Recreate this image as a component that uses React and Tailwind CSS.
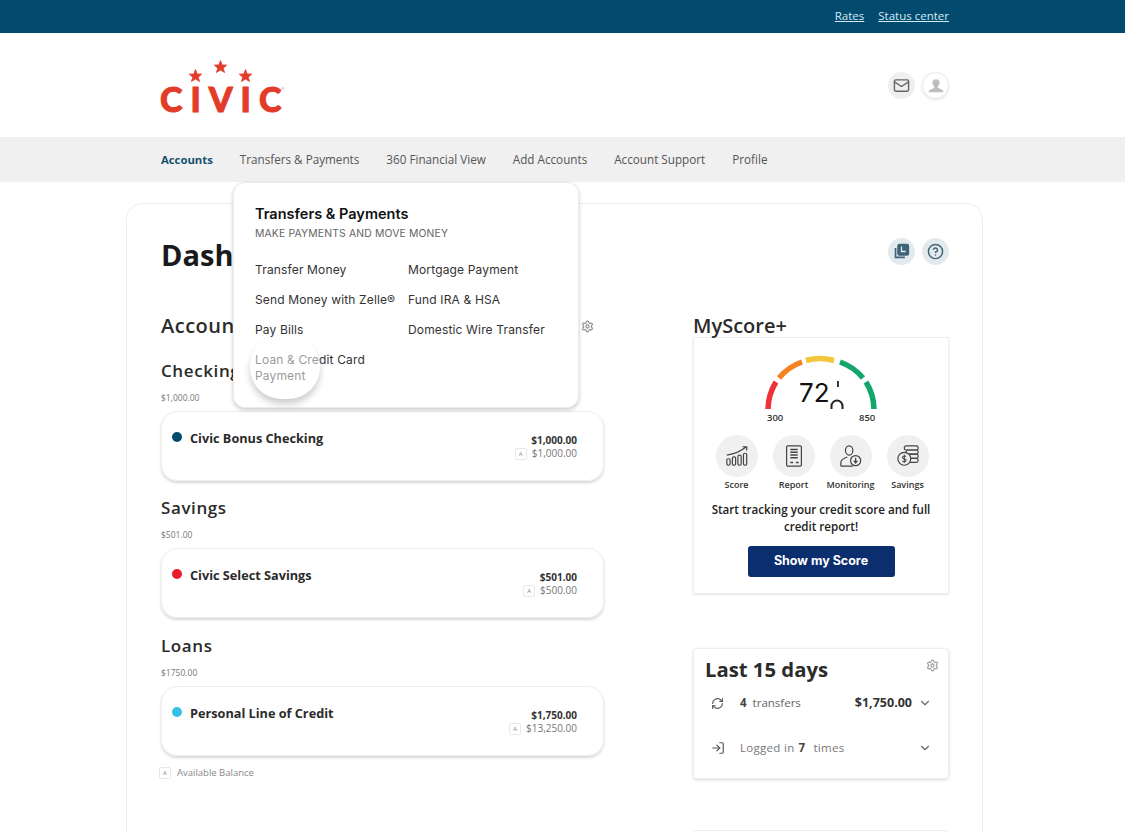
import React from "react";
import { ChevronDown, CircleHelp, LogIn, Mail, RefreshCw, Settings } from "lucide-react";

const open = "font-['Open_Sans',sans-serif]";
const inter = "font-['Inter',sans-serif]";

const Star = ({ className }) => (
  <svg viewBox="0 0 24 24" className={className}>
    <polygon fill="#e33b2a" stroke="#e33b2a" strokeWidth="1.500" strokeLinejoin="round" points="12,1 15,9 23.500,9.500 17,15 19.500,23 12,18.500 4.500,23 7,15 0.500,9.500 9,9" />
  </svg>
);

const Logo = () => (
  <div className="flex flex-col w-[126px]">
    <div className="flex justify-center items-start gap-[12px] h-[25px] -ml-[6px]">
      <Star className="w-[13px] h-[13px] mt-[9px]" />
      <Star className="w-[13px] h-[13px]" />
      <Star className="w-[13px] h-[13px] mt-[9px]" />
    </div>
    <div className="flex items-start h-[30px] -mt-[1px]">
      <span className="font-['Lato',sans-serif] font-black text-[#e33b2a] text-[34px] leading-[30px] tracking-[8px] [-webkit-text-stroke:1px_#e33b2a]">
        CIVI<span className="tracking-normal">C</span>
      </span>
      <span className="text-[4px] text-gray-400 mt-[2px]">®</span>
    </div>
  </div>
);

const NavItem = ({ children, active }) => (
  <span className={`${open} ${active ? "text-[11.300px] font-bold text-[#14506f]" : "text-[11.700px] text-[#555]"}`}>{children}</span>
);

const RoundIcon = ({ children, className }) => (
  <div className={`w-[27px] h-[27px] rounded-full flex items-center justify-center ${className}`}>{children}</div>
);

const ABadge = () => (
  <span className="w-[12px] h-[12px] border border-[#e8e8e8] rounded-[2px] text-[6px] leading-[10px] text-center text-[#888]">A</span>
);

const Section = ({ title, total, dot, name, amount, available, className }) => (
  <div className={className}>
    <h3 className={`${open} font-semibold text-[17px] leading-[24px] tracking-[0.600px] text-[#2b2b2b]`}>{title}</h3>
    <p className={`${open} text-[8.500px] leading-[12px] mt-[9px] text-[#777]`}>{total}</p>
    <div className="mt-[7px] h-[70px] rounded-[16px] border border-[#eeeeee] shadow-[0_2px_3px_rgba(0,0,0,0.16)] flex justify-between pl-[10px] pr-[26px] pt-[17px]">
      <div className="flex items-start gap-[8px]">
        <span className={`w-[10px] h-[10px] rounded-full mt-[3px] ${dot}`} />
        <span className={`${open} font-bold text-[12.700px] leading-[18px] text-[#2b2b2b]`}>{name}</span>
      </div>
      <div className={`${open} flex flex-col items-end text-[10px] leading-[13px] pt-[5px]`}>
        <span className="font-bold text-[#333]">{amount}</span>
        <span className="flex items-center gap-[5px] text-[#777]">
          <ABadge />
          {available}
        </span>
      </div>
    </div>
  </div>
);

const Gauge = () => (
  <svg viewBox="0 0 120 62" className="w-[120px] h-[62px]" fill="none" strokeWidth="5.500">
    <path d="M7 55 A52 52 0 0 1 15 28" stroke="#ee3338" />
    <path d="M18 24 A52 52 0 0 1 41 8" stroke="#f58220" />
    <path d="M45 6.500 A52 52 0 0 1 73 6.500" stroke="#f4c63d" />
    <path d="M79 8 A52 52 0 0 1 102 24" stroke="#12a66c" />
    <path d="M105 28 A52 52 0 0 1 113 55" stroke="#12a66c" />
    <path d="M77 27 L77 33" stroke="#222" strokeWidth="1.800" />
    <path d="M70.500 55 V52 A5.500 5.500 0 0 1 81.500 52 V55" stroke="#222" strokeWidth="2" />
  </svg>
);

const ScoreIcon = () => (
  <svg viewBox="0 0 26 26" className="w-[24px] h-[24px]" fill="none" stroke="#444" strokeWidth="1.300">
    <rect x="2" y="16" width="3.500" height="7" rx="1.500" />
    <rect x="8" y="14" width="3.500" height="9" rx="1.500" />
    <rect x="14" y="12" width="3.500" height="11" rx="1.500" />
    <rect x="20" y="10" width="3.500" height="13" rx="1.500" />
    <path d="M2 12 C9 11 16 9 23 3 M19 3 H23.500 V7" />
  </svg>
);

const ReportIcon = () => (
  <svg viewBox="0 0 26 26" className="w-[24px] h-[24px]" fill="none" stroke="#444" strokeWidth="1.300">
    <rect x="5" y="2" width="16" height="22" rx="1.500" />
    <path d="M9 6 H17 M9 9 H17 M9 12 H17 M9 15 H17 M9 20 H12 M15 20 H18" strokeWidth="1.600" />
  </svg>
);

const MonitorIcon = () => (
  <svg viewBox="0 0 26 26" className="w-[24px] h-[24px]" fill="none" stroke="#444" strokeWidth="1.300">
    <ellipse cx="11" cy="7" rx="4" ry="5" />
    <path d="M2 24 V20 C2 16 7 15 9 14 M2 24 H15" />
    <circle cx="18" cy="18" r="5.500" />
    <path d="M18 15 V20 M16 18 L18 20.500 L20 18" />
  </svg>
);

const SavingsIcon = () => (
  <svg viewBox="0 0 26 26" className="w-[24px] h-[24px]" fill="none" stroke="#444" strokeWidth="1.300">
    <rect x="9" y="2" width="15" height="4.500" rx="2" />
    <rect x="11" y="6.500" width="13" height="4.500" rx="2" />
    <rect x="13" y="11" width="11" height="4.500" rx="2" />
    <rect x="13" y="15.500" width="11" height="4.500" rx="2" />
    <circle cx="9" cy="16" r="7" fill="#f0f0f0" />
    <path d="M11 13.500 C10 12.500 7 12.800 7 14.500 C7 16.500 11 15.500 11 17.500 C11 19.200 8 19.500 7 18.500 M9 11.500 V20.500" strokeWidth="1.100" />
  </svg>
);

const Feature = ({ label, children }) => (
  <div className="flex flex-col items-center w-[57px]">
    <div className="w-[42px] h-[42px] rounded-full bg-[#f0f0f0] flex items-center justify-center">{children}</div>
    <span className={`${open} font-semibold text-[9px] leading-[12px] mt-[2px] text-[#333] whitespace-nowrap`}>{label}</span>
  </div>
);

const DropLink = ({ children, className }) => (
  <span className={`${inter} text-[12px] leading-[16px] tracking-[0.150px] text-[#333] ${className}`}>{children}</span>
);

const NavDropdown = () => (
  <div className="absolute left-[233px] top-[182px] w-[346px] h-[226px] bg-white rounded-[12px] border border-[#ececec] shadow-[0_2px_4px_rgba(0,0,0,0.2)] pl-[21px] pt-[23px] z-10">
    <p className={`${inter} font-semibold text-[14.500px] leading-[16px] text-[#111]`}>Transfers &amp; Payments</p>
    <p className={`${inter} text-[10.400px] leading-[12px] mt-[6px] text-[#666] tracking-[0.150px]`}>MAKE PAYMENTS AND MOVE MONEY</p>
    <div className="grid grid-cols-[153px_150px] gap-y-[14px] mt-[22px]">
      <DropLink>Transfer Money</DropLink>
      <DropLink>Mortgage Payment</DropLink>
      <DropLink>Send Money with Zelle®</DropLink>
      <DropLink>Fund IRA &amp; HSA</DropLink>
      <DropLink>Pay Bills</DropLink>
      <DropLink>Domestic Wire Transfer</DropLink>
      <DropLink className="w-[125px]">Loan &amp; Credit Card Payment</DropLink>
    </div>
    {/* click highlight */}
    <div className="absolute left-[16px] top-[152px] w-[70px] h-[64px] rounded-full bg-white/50 shadow-[0_5px_7px_rgba(0,0,0,0.2)]" />
  </div>
);

const App = () => {
  return (
    <div className="relative w-[1125px] h-[833px] overflow-hidden bg-white">
      {/* Top bar */}
      <div className="h-[33px] bg-[#024b6e] flex justify-end items-center gap-[14px] pr-[176px] pb-[2px]">
        <a className={`${open} text-[11.500px] underline text-[#d4eaf5]`}>Rates</a>
        <a className={`${open} text-[11.500px] underline text-[#d4eaf5]`}>Status center</a>
      </div>

      {/* Logo row */}
      <div className="h-[104px] flex justify-between items-start pl-[160px] pr-[176px]">
        <div className="pt-[27px]">
          <Logo />
        </div>
        <div className="flex gap-[7px] pt-[39px]">
          <RoundIcon className="bg-[#efefef]">
            <Mail size={17} strokeWidth={2} color="#666" />
          </RoundIcon>
          <RoundIcon className="border border-[#e8e8e8] shadow-sm">
            <svg viewBox="0 0 20 20" className="w-[18px] h-[18px]" fill="#bdbdbd">
              <circle cx="10" cy="6.500" r="4" />
              <path d="M8 10 H12 V12 L18 15 V17 H2 V15 L8 12 Z" />
            </svg>
          </RoundIcon>
        </div>
      </div>

      {/* Nav */}
      <div className="h-[45px] bg-[#f0f0f0] flex items-center gap-[27px] pl-[161px] pt-[1px]">
        <NavItem active>Accounts</NavItem>
        <NavItem>Transfers &amp; Payments</NavItem>
        <NavItem>360 Financial View</NavItem>
        <NavItem>Add Accounts</NavItem>
        <NavItem>Account Support</NavItem>
        <NavItem>Profile</NavItem>
      </div>

      <NavDropdown />

      {/* Main card */}
      <div className="ml-[126px] mt-[21px] w-[857px] h-[700px] rounded-[16px] border border-[#eeeeee] pl-[34px] pr-[33px] pt-[28px]">
        <div className="flex justify-between items-start h-[44px]">
          <h1 className={`${open} font-bold text-[29px] leading-[46px] text-[#1a1a1a]`}>Dashboard</h1>
          <div className="flex gap-[7px] pt-[6px]">
            <RoundIcon className="bg-[#e3eaee]">
              <svg viewBox="0 0 20 20" className="w-[17px] h-[17px]" fill="none" stroke="#3f6478" strokeWidth="2">
                <rect x="6" y="2" width="12" height="12" rx="1.500" fill="#3f6478" />
                <path d="M10 4 V10 H15" stroke="#e3eaee" strokeWidth="1.500" />
                <path d="M3 6 V17 H14" />
              </svg>
            </RoundIcon>
            <RoundIcon className="bg-[#e3eaee]">
              <CircleHelp size={17} strokeWidth={2} color="#3f6478" />
            </RoundIcon>
          </div>
        </div>

        <div className="flex justify-between mt-[36px]">
          {/* Accounts column */}
          <div className="w-[443px]">
            <div className="flex justify-between items-center h-[28px] pr-[10px]">
              <h2 className={`${open} font-semibold text-[20px] leading-[28px] tracking-[0.500px] text-[#2b2b2b]`}>Accounts</h2>
              <Settings size={13} color="#888" />
            </div>
            <Section className="mt-[19px]" title="Checking" total="$1,000.00" dot="bg-[#024b6e]" name="Civic Bonus Checking" amount="$1,000.00" available="$1,000.00" />
            <Section className="mt-[15px]" title="Savings" total="$501.00" dot="bg-[#ec1c2d]" name="Civic Select Savings" amount="$501.00" available="$500.00" />
            <Section className="mt-[16px]" title="Loans" total="$1750.00" dot="bg-[#35c0e8]" name="Personal Line of Credit" amount="$1,750.00" available="$13,250.00" />
            <div className={`${open} flex items-center gap-[6px] mt-[10px] -ml-[2px] text-[9.500px] text-[#888]`}>
              <ABadge />
              Available Balance
            </div>
          </div>

          {/* Right column */}
          <div className="w-[256px]">
            <h2 className={`${open} font-semibold text-[20px] leading-[28px] text-[#2b2b2b]`}>MyScore+</h2>
            <div className="-mt-[3px] h-[257px] border border-[#eeeeee] shadow-[0_1px_2px_rgba(0,0,0,0.1)] flex flex-col items-center pt-[16px]">
              <div className="relative">
                <Gauge />
                <span className={`${inter} absolute left-[38px] top-[23px] text-[26px] leading-[32px] text-[#111]`}>72</span>
                <span className={`${open} absolute left-[6px] top-[58px] text-[9.500px] leading-[12px] font-semibold text-[#333]`}>300</span>
                <span className={`${open} absolute left-[98px] top-[58px] text-[9.500px] leading-[12px] font-semibold text-[#333]`}>850</span>
              </div>
              <div className="flex mt-[19px] ml-[2px]">
                <Feature label="Score"><ScoreIcon /></Feature>
                <Feature label="Report"><ReportIcon /></Feature>
                <Feature label="Monitoring"><MonitorIcon /></Feature>
                <Feature label="Savings"><SavingsIcon /></Feature>
              </div>
              <p className={`${open} font-semibold text-[11.600px] leading-[17px] mt-[10px] w-[240px] text-center text-[#222]`}>
                Start tracking your credit score and full credit report!
              </p>
              <button className={`${inter} font-bold text-[12.500px] mt-[11px] w-[147px] h-[31px] rounded-[3px] bg-[#0b2f6e] text-white`}>Show my Score</button>
            </div>

            <div className="mt-[54px] h-[131px] border border-[#eeeeee] rounded-[4px] shadow-[0_1px_3px_rgba(0,0,0,0.16)] pl-[11px] pr-[16px] pt-[6px]">
              <div className="flex justify-between">
                <h2 className={`${open} font-bold text-[20.300px] leading-[28px] text-[#2b2b2b]`}>Last 15 days</h2>
                <Settings size={13} color="#999" className="mt-[4px] -mr-[7px]" />
              </div>
              <div className={`${open} flex items-center h-[20px] mt-[10px] text-[11.500px] text-[#666]`}>
                <RefreshCw size={13} color="#555" className="ml-[6px] mr-[16px]" />
                <b className="text-[#444] mr-[6px]">4</b>
                transfers
                <b className="ml-auto text-[12.500px] text-[#333]">$1,750.00</b>
                <ChevronDown size={14} color="#666" className="ml-[6px]" />
              </div>
              <div className={`${open} flex items-center h-[20px] mt-[25px] text-[11.500px] tracking-[0.300px] text-[#777]`}>
                <LogIn size={14} color="#555" className="ml-[6px] mr-[15px]" />
                Logged in <b className="text-[#444] ml-[4px] mr-[8px]">7</b> times
                <ChevronDown size={14} color="#666" className="ml-auto" />
              </div>
            </div>

            <div className="mt-[51px] h-[60px] border border-[#eeeeee] rounded-[4px]" />
          </div>
        </div>
      </div>
    </div>
  );
};

export default App;
